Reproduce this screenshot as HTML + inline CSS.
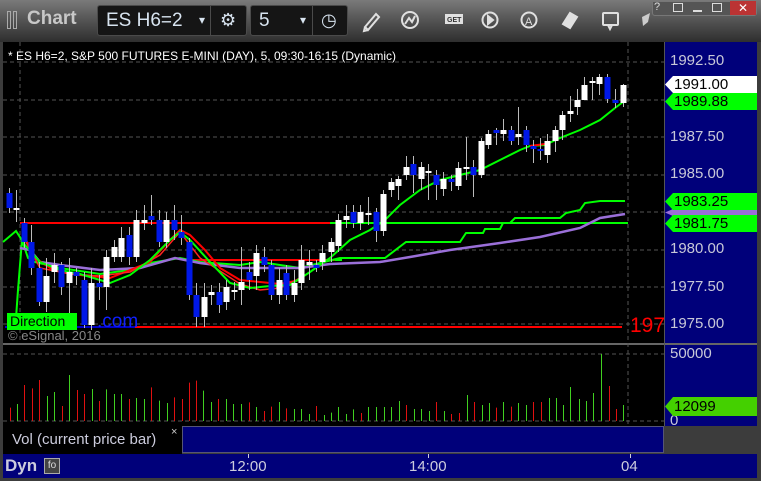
<!DOCTYPE html>
<html><head><meta charset="utf-8"><style>
*{margin:0;padding:0;box-sizing:border-box}
body{width:761px;height:481px;background:#3c3c3c;overflow:hidden;font-family:"Liberation Sans",sans-serif;position:relative}
.tb{position:absolute;left:0;top:0;width:761px;height:42px;background:linear-gradient(#7a7a7a,#5a5a5a 40%,#2e2e2e)}
.box{position:absolute;top:5px;height:31px;background:#151515;border:1px solid #4a4a4a;border-radius:3px;color:#d8e4f0;font-size:19px;line-height:29px}
.ax{position:absolute;left:670px;color:#c8c8d8;font-size:15px}
.tag{position:absolute;left:665px;width:92px;height:17px;font-size:15px;line-height:17px;padding-left:9px;color:#000;clip-path:polygon(0 50%,8px 0,100% 0,100% 100%,8px 100%)}
</style></head><body>
<div class="tb"></div>
<div style="position:absolute;left:7px;top:11px;width:4px;height:18px;border:1px solid #aaa"></div>
<div style="position:absolute;left:13px;top:11px;width:4px;height:18px;border:1px solid #aaa"></div>
<div style="position:absolute;left:27px;top:8px;font-size:19px;font-weight:bold;color:#c8c8c8">Chart</div>
<div class="box" style="left:97px;width:150px;padding-left:8px">ES H6=2<span style="position:absolute;left:101px;font-size:12px">▾</span><span style="position:absolute;left:112px;top:0;width:1px;height:29px;background:#4a4a4a"></span><span style="position:absolute;left:122px;top:0;font-size:18px">⚙</span></div>
<div class="box" style="left:250px;width:98px;padding-left:8px">5<span style="position:absolute;left:49px;font-size:12px">▾</span><span style="position:absolute;left:61px;top:0;width:1px;height:29px;background:#4a4a4a"></span><span style="position:absolute;left:70px;top:0;font-size:18px">◷</span></div>
<svg style="position:absolute;left:0;top:0" width="761" height="42" fill="none" stroke="#e0e0e0" stroke-width="2">
<path d="M365 27 L376 14 L379 17 L368 30 Z M365 27 L364 31 L368 30"/>
<circle cx="410" cy="20" r="8"/><path d="M405 24 L409 18 L412 22 L415 16"/>
<rect x="446" y="15" width="16" height="8" fill="#e0e0e0"/><text x="447" y="22" font-size="7" fill="#333" stroke="none" font-family="Liberation Sans" font-weight="bold">GET</text>
<circle cx="490" cy="20" r="7.5"/><path d="M488 16 L493 20 L488 24 Z" fill="#e0e0e0"/>
<circle cx="529" cy="20" r="7.5"/><text x="525" y="25" font-size="11" fill="#e0e0e0" stroke="none">A</text>
<path d="M563 24 L570 13 L577 17 L570 28 Z" fill="#e0e0e0"/>
<rect x="603" y="13" width="15" height="12" rx="1"/><path d="M608 25 L610 29 L612 25"/>
<path d="M642 17 L650 13 L648 22 L643 26 Z" fill="#ccc" stroke="none"/>
</svg>
<div style="position:absolute;left:652px;top:1px;width:105px;height:15px;background:#555;border:1px solid #777;border-radius:0 0 3px 3px"></div>
<div style="position:absolute;left:654px;top:1px;font-size:11px;color:#ddd">?</div>
<div style="position:absolute;left:673px;top:3px;width:10px;height:9px;border:1px solid #ddd"></div>
<div style="position:absolute;left:693px;top:10px;width:9px;height:2px;background:#ddd"></div>
<div style="position:absolute;left:712px;top:3px;width:10px;height:9px;border:1px solid #ddd"></div>
<div style="position:absolute;left:730px;top:1px;width:26px;height:14px;background:#b33;color:#fff;font-size:12px;text-align:center;line-height:14px">✕</div>

<div style="position:absolute;left:3px;top:42px;width:662px;height:384px;background:#000"></div>
<div style="position:absolute;left:665px;top:42px;width:92px;height:384px;background:#00007a"></div>
<div style="position:absolute;left:3px;top:343px;width:754px;height:2px;background:#666"></div>
<div style="position:absolute;left:664px;top:42px;width:1px;height:384px;background:#555"></div>

<svg style="position:absolute;left:0;top:0" width="761" height="481">
<g stroke="#555" stroke-dasharray="4,3" stroke-width="1">
<path d="M3 62H664M3 100H664M3 137H664M3 175H664M3 212H664M3 250H664M3 287H664M3 324H664M3 354H664M3 421H664"/>
<path d="M20 42V343M628 42V426"/>
</g>
<!-- indicator lines -->
<path d="M20 223H340" stroke="#f00" stroke-width="2"/>
<path d="M330 223H628" stroke="#0f0" stroke-width="2"/>
<path d="M185 260H335" stroke="#f00" stroke-width="2"/>
<path d="M335 260H342" stroke="#0f0" stroke-width="2"/>
<path d="M135 327H622" stroke="#f00" stroke-width="2"/>
<path d="M5 327H135" stroke="#00f" stroke-width="1.5"/>
<path d="M16 318L18 290L22 240L28 258L35 262L60 268L100 274L130 270L150 263L180 258L200 262L240 265L260 262L300 268L320 263L340 258L385 258L406 242L460 242L466 233L483 233L485 229L500 229L503 223L510 223L515 218L560 218L566 213L580 210L585 203L600 201L625 201" stroke="#0f0" stroke-width="2" fill="none"/>
<path d="M20 248L30 250L40 262L60 265L100 270L140 268L175 258L200 263L240 268L300 268L330 264L380 262L410 257L450 250L500 243L540 237L580 228L600 218L625 214" stroke="#9a6fd8" stroke-width="2.5" fill="none"/>
<path d="M25 238L35 258L50 268L80 275L110 278L130 270L150 262L170 240L180 230L190 235L205 250L220 268L240 280L260 282L280 284L300 280" stroke="#f00" stroke-width="2" fill="none"/>
<path d="M25 240L40 268L70 274L100 276L130 272L160 255L180 232L200 258L240 284L260 290L280 288L300 278" stroke="#f22" stroke-width="1.5" fill="none"/>
<path d="M3 242L16 231L25 245L40 262L60 270L80 274L100 280L110 283L130 275L150 260L170 240L180 232L190 240L210 262L230 283L250 288L270 286L290 285L310 272L330 258L350 240L370 230L385 220L400 205L420 190L440 180L460 175L480 170L500 160L520 150L530 146L545 145L560 138L580 130L600 120L615 108L623 102" stroke="#0f0" stroke-width="2" fill="none"/>
<path d="M530 146L545 144" stroke="#f00" stroke-width="2"/>
<!-- candles -->
<g id="cd"></g>
</svg>
<svg style="position:absolute;left:0;top:0" width="761" height="481" id="cs"></svg>
<svg style="position:absolute;left:0;top:0" width="761" height="481" id="vs"></svg>

<div style="position:absolute;left:8px;top:49px;font-size:12px;color:#fff">* ES H6=2, S&amp;P 500 FUTURES E-MINI (DAY), 5, 09:30-16:15 (Dynamic)</div>
<div style="position:absolute;left:97px;top:311px;font-size:19px;color:#1020ff">.com</div>
<div style="position:absolute;left:7px;top:313px;width:70px;height:17px;background:#0f0;color:#000;font-size:14px;line-height:17px;padding-left:3px">Direction</div>
<div style="position:absolute;left:8px;top:328px;font-size:13px;color:#888">© eSignal, 2016</div>
<div style="position:absolute;left:630px;top:314px;font-size:21px;color:#f00">197</div>

<div class="ax" style="top:52px">1992.50</div>
<div class="ax" style="top:128px">1987.50</div>
<div class="ax" style="top:165px">1985.00</div>
<div class="ax" style="top:240px">1980.00</div>
<div class="ax" style="top:278px">1977.50</div>
<div class="ax" style="top:315px">1975.00</div>
<div class="ax" style="top:345px">50000</div>
<div class="ax" style="top:412px">0</div>
<div class="tag" style="top:76px;background:#fff">1991.00</div>
<div class="tag" style="top:93px;background:#0f0">1989.88</div>
<div class="tag" style="top:209px;height:7px;background:#9a6fd8"></div>
<div class="tag" style="top:193px;background:#0f0">1983.25</div>
<div class="tag" style="top:215px;background:#0f0">1981.75</div>
<div class="tag" style="top:397px;height:19px;background:#44d000;line-height:19px">12099</div>

<div style="position:absolute;left:3px;top:426px;width:179px;height:28px;background:#000;color:#ccd;font-size:15px;line-height:28px;padding-left:9px">Vol (current price bar)</div>
<div style="position:absolute;left:171px;top:426px;color:#ccc;font-size:11px">×</div>
<div style="position:absolute;left:182px;top:426px;width:482px;height:27px;background:#00007a;border:1px solid #557"></div>
<div style="position:absolute;left:3px;top:454px;width:754px;height:24px;background:#00007a"></div>
<div style="position:absolute;left:5px;top:456px;font-size:17px;font-weight:bold;color:#ccd">Dyn</div>
<div style="position:absolute;left:44px;top:458px;width:16px;height:16px;border:1px solid #aaa;background:#444;color:#ddd;font-size:10px;text-align:center;line-height:14px">fo</div>
<div style="position:absolute;left:229px;top:458px;font-size:15px;color:#ccd">12:00</div>
<div style="position:absolute;left:409px;top:458px;font-size:15px;color:#ccd">14:00</div>
<div style="position:absolute;left:621px;top:458px;font-size:15px;color:#ccd">04</div>
<div style="position:absolute;left:248px;top:454px;width:1px;height:4px;background:#ccd"></div>
<div style="position:absolute;left:428px;top:454px;width:1px;height:4px;background:#ccd"></div>
<div style="position:absolute;left:630px;top:454px;width:1px;height:4px;background:#ccd"></div>

<script>
var C=[[9,193,208,'b',188,213],[16,208,210,'w',190,222],[24,223,242,'b',218,248],[31,242,268,'b',225,275],[39,268,302,'b',262,306],[46,276,302,'w',258,312],[54,265,272,'w',253,283],[61,265,287,'b',262,295],[69,272,283,'w',258,313],[76,272,276,'b',268,285],[84,280,325,'b',272,328],[91,283,325,'w',268,330],[99,283,287,'b',275,300],[106,257,287,'w',250,310],[114,247,257,'w',240,262],[121,238,257,'w',227,262],[129,235,257,'b',227,265],[136,220,257,'w',210,262],[144,220,223,'w',205,230],[151,216,220,'b',195,225],[159,220,242,'b',210,247],[166,220,242,'w',212,248],[174,220,230,'b',205,240],[181,232,238,'b',215,245],[189,242,295,'b',238,300],[196,295,317,'b',283,327],[204,297,317,'w',283,327],[211,292,295,'w',285,305],[219,292,305,'b',283,313],[226,287,302,'w',280,310],[234,290,292,'w',282,300],[241,282,290,'w',247,305],[249,272,280,'b',262,290],[256,253,276,'w',245,290],[264,257,265,'b',247,272],[271,265,295,'b',260,300],[279,280,295,'w',268,304],[286,273,295,'b',265,300],[294,283,295,'w',270,302],[301,260,283,'w',245,290],[309,262,265,'w',250,280],[316,265,268,'b',260,272],[322,253,262,'w',245,270],[331,242,252,'w',238,262],[338,220,246,'w',214,252],[346,216,220,'w',205,228],[353,212,223,'b',205,228],[360,212,223,'w',205,230],[368,213,215,'w',197,225],[376,212,231,'b',208,242],[383,194,231,'w',190,236],[391,182,190,'w',178,197],[398,179,186,'w',176,200],[406,167,175,'w',156,180],[413,164,175,'b',156,193],[421,167,179,'w',162,190],[428,171,173,'w',164,200],[436,175,185,'b',170,200],[443,179,189,'w',172,196],[451,179,182,'b',175,191],[458,168,186,'w',162,190],[466,167,169,'w',137,180],[473,167,175,'b',160,197],[481,141,175,'w',138,178],[488,134,145,'w',130,149],[496,130,133,'b',128,145],[503,130,134,'w',119,141],[511,130,141,'b',126,145],[518,134,137,'w',107,145],[526,130,145,'b',126,152],[533,146,149,'b',140,163],[540,149,151,'b',138,160],[547,141,155,'w',134,163],[555,130,141,'w',126,152],[562,115,130,'w',111,140],[570,111,114,'w',96,122],[577,100,107,'w',89,115],[584,85,100,'w',77,100],[592,81,83,'w',77,100],[599,77,84,'w',74,95],[607,77,99,'b',74,103],[615,100,103,'b',89,108],[623,85,103,'w',84,107]];
var s='';C.forEach(function(c){s+='<line x1="'+c[0]+'.5" x2="'+c[0]+'.5" y1="'+c[4]+'" y2="'+c[5]+'" stroke="#bbb"/>';var h=Math.max(c[2]-c[1],2);s+='<rect x="'+(c[0]-2.5)+'" y="'+c[1]+'" width="6" height="'+h+'" fill="'+(c[3]=='b'?'#0018e8':'#fff')+'"/>';});
document.getElementById('cs').innerHTML=s;
var V=[[20,'r',323],[34,'g',312],[50,'r',255],[65,'r',265],[80,'r',240],[96,'g',288],[111,'g',276],[127,'r',318],[142,'g',225],[158,'r',270],[173,'r',282],[189,'g',267],[204,'r',303],[219,'g',268],[235,'g',282],[250,'g',282],[266,'r',297],[281,'g',294],[297,'g',297],[312,'r',262],[327,'g',302],[343,'g',309],[359,'r',292],[374,'r',297],[389,'r',248],[404,'r',242],[419,'g',272],[435,'g',306],[450,'r',297],[466,'g',297],[481,'g',312],[496,'g',312],[512,'r',307],[527,'g',321],[543,'r',333],[558,'r',320],[574,'g',306],[590,'r',325],[605,'g',327],[620,'g',327],[636,'g',342],[651,'r',318],[667,'g',345],[682,'g',338],[697,'g',321],[713,'g',342],[728,'g',328],[744,'r',339],[759,'g',321],[775,'g',321],[791,'g',321],[806,'g',321],[821,'g',303],[837,'r',315],[852,'g',327],[868,'g',327],[883,'g',333],[899,'r',306],[915,'g',333],[930,'r',342],[945,'r',339],[961,'g',285],[976,'r',306],[992,'g',315],[1007,'g',309],[1022,'r',323],[1037,'g',306],[1052,'r',320],[1068,'g',309],[1083,'g',315],[1099,'r',306],[1114,'r',306],[1130,'g',294],[1145,'g',294],[1160,'g',315],[1175,'g',261],[1192,'g',297],[1207,'g',303],[1222,'g',279],[1238,'g',162],[1254,'r',258],[1268,'r',327],[1284,'g',315]];
var v='';V.forEach(function(b){var x=Math.round(b[0]/2.06)+0.5;v+='<line x1="'+x+'" x2="'+x+'" y1="'+(300+b[2]/3)+'" y2="421" stroke="'+(b[1]=='r'?'#e01010':'#40d020')+'"/>';});
document.getElementById('vs').innerHTML=v;
</script>
</body></html>
